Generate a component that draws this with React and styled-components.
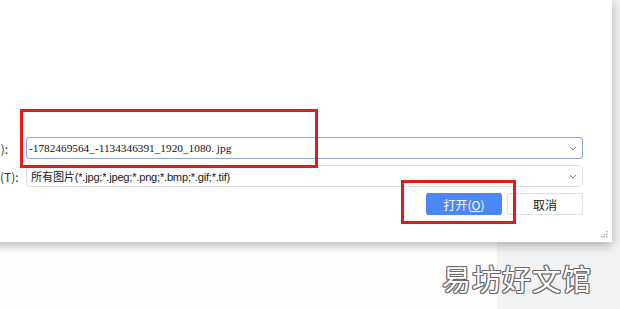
import React from 'react'
import styled, { createGlobalStyle } from 'styled-components'

const GlobalStyle = createGlobalStyle`
  html, body {
    margin: 0;
    padding: 0;
    background: #fdfdfd;
  }
`

const Screen = styled.div`
  position: relative;
  width: 620px;
  height: 309px;
  overflow: hidden;
  background: linear-gradient(to right, #fdfdfd 497px, #f1f2f4 497px);
  font-family: "Liberation Sans", "Noto Sans CJK SC", sans-serif;
`

const Dialog = styled.div`
  position: relative;
  width: 672px;
  height: 242px;
  margin-left: -60px;
  box-sizing: border-box;
  padding: 0 29px 27px 12px;
  background: #fff;
  box-shadow: 0 3px 10px rgba(0, 0, 0, 0.3);
  display: flex;
  flex-direction: column;
  justify-content: flex-end;
`

const Form = styled.div`
  display: grid;
  grid-template-columns: 74px 1fr;
  grid-auto-rows: 22px;
  row-gap: 6px;
  align-items: center;
`

const Label = styled.div`
  font-size: 12px;
  color: #333;
  white-space: nowrap;
  font-family: "Noto Sans CJK SC", sans-serif;
`

const Select = styled.div`
  height: 22px;
  box-sizing: border-box;
  display: flex;
  align-items: center;
  justify-content: space-between;
  padding: 0 5px 0 ${(p) => (p.$focused ? 2 : 4)}px;
  border: 1px solid ${(p) => (p.$focused ? '#8fa5d6' : '#dedede')};
  border-radius: 3px;
  background: #fff;
  color: #222;
`

const FileName = styled.span`
  font-family: "Liberation Serif", "Noto Sans CJK SC", serif;
  font-size: 11.3px;
  color: #111;
`

const FileType = styled.span`
  font-family: "Liberation Sans", "Noto Sans CJK SC", sans-serif;
  font-size: 11.2px;
  letter-spacing: -0.25px;
`

const Chevron = () => (
  <svg width="8" height="5" viewBox="0 0 8 5">
    <path d="M0.8 0.8 L4 4 L7.2 0.8" fill="none" stroke="#8a8a8a" strokeWidth="1" />
  </svg>
)

const Actions = styled.div`
  grid-column: 2;
  display: flex;
  justify-content: flex-end;
  gap: 5px;
`

const Button = styled.button`
  width: 76px;
  height: 22px;
  padding: 0;
  border-radius: 2px;
  font-family: "Noto Sans CJK SC", sans-serif;
  font-size: 12px;
  border: 1px solid ${(p) => (p.$primary ? '#4b87f6' : '#e2e2e2')};
  background: ${(p) => (p.$primary ? '#4b87f6' : '#fff')};
  color: ${(p) => (p.$primary ? '#fff' : '#222')};
`

const Grip = styled.svg`
  position: absolute;
  right: 4px;
  bottom: 4px;
`

const Mark = styled.div`
  position: absolute;
  border: 3px solid #e31a1a;
  box-sizing: border-box;
  left: ${(p) => p.$x}px;
  top: ${(p) => p.$y}px;
  width: ${(p) => p.$w}px;
  height: ${(p) => p.$h}px;
`

const Watermark = styled.div`
  position: absolute;
  left: 442px;
  top: 257px;
  font-family: "Noto Sans CJK SC", sans-serif;
  font-size: 29px;
  letter-spacing: 1px;
  color: #fff;
  text-shadow:
    1px 0 #6a6a6a, -1px 0 #6a6a6a, 0 1px #6a6a6a, 0 -1px #6a6a6a,
    1px 1px #6a6a6a, -1px -1px #6a6a6a, 1px -1px #6a6a6a, -1px 1px #6a6a6a;
`

export default function App() {
  return (
    <Screen>
      <GlobalStyle />
      <Dialog>
        <Form>
          <Label>文件名(N):</Label>
          <Select $focused>
            <FileName>-1782469564_-1134346391_1920_1080. jpg</FileName>
            <Chevron />
          </Select>
          <Label>文件类型(T):</Label>
          <Select>
            <FileType>所有图片(*.jpg;*.jpeg;*.png;*.bmp;*.gif;*.tif)</FileType>
            <Chevron />
          </Select>
          <Actions>
            <Button $primary>
              打开(<u>O</u>)
            </Button>
            <Button>取消</Button>
          </Actions>
        </Form>
        <Grip width="7" height="7" viewBox="0 0 7 7">
          <g fill="#b5b5b5">
            <rect x="5" y="0" width="1.5" height="1.5" />
            <rect x="2.5" y="2.5" width="1.5" height="1.5" />
            <rect x="5" y="2.5" width="1.5" height="1.5" />
            <rect x="0" y="5" width="1.5" height="1.5" />
            <rect x="2.5" y="5" width="1.5" height="1.5" />
            <rect x="5" y="5" width="1.5" height="1.5" />
          </g>
        </Grip>
      </Dialog>
      <Mark $x={20} $y={109} $w={298} $h={59} />
      <Mark $x={401} $y={180} $w={115} $h={44} />
      <Watermark>易坊好文馆</Watermark>
    </Screen>
  )
}
